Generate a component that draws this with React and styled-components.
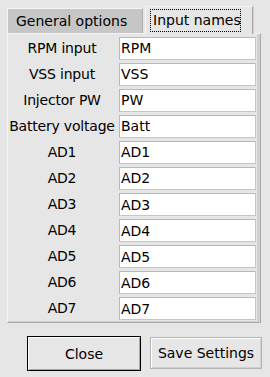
import React from "react";
import styled, { createGlobalStyle } from "styled-components";

const Global = createGlobalStyle`
  html, body { margin: 0; padding: 0; background: #e6e6e6; }
  body { font-family: "DejaVu Sans", "Liberation Sans", sans-serif; }
  * { box-sizing: border-box; }
`;

const Window = styled.div`
  width: 270px;
  height: 377px;
  padding: 6px 0 0 7px;
  background: #e6e6e6;
  font-family: "DejaVu Sans", sans-serif;
  font-size: 14px;
  color: #000;
`;

const TabBar = styled.div`
  display: flex;
  align-items: flex-start;
  height: 27px;
  position: relative;
  z-index: 1;
`;

const Tab = styled.div`
  position: relative;
  display: flex;
  align-items: center;
  height: ${(p) => (p.$selected ? "28px" : "25px")};
  margin-top: ${(p) => (p.$selected ? "0" : "2px")};
  margin-left: ${(p) => (p.$selected ? "2px" : "0")};
  width: ${(p) => p.$width}px;
  padding-left: ${(p) => (p.$selected ? "7px" : "8px")};
  background: ${(p) => (p.$selected ? "#e6e6e6" : "#c6c6c6")};
  border-top: 1px solid #f4f4f4;
  border-left: 1px solid #f4f4f4;
  border-right: 1px solid ${(p) => (p.$selected ? "#a8a8a8" : "#b0b0b0")};
  box-shadow: ${(p) => (p.$selected ? "1px 0 0 #d0d0d0" : "none")};
  white-space: nowrap;
`;

const Focus = styled.span`
  position: absolute;
  left: 4px;
  top: 2px;
  width: 91px;
  height: 23px;
  border: 1px dotted #000;
`;

const TabLabel = styled.span`
  position: relative;
  line-height: 17px;
`;

const Panel = styled.div`
  width: 254px;
  height: 290px;
  padding-top: 1px;
  border-top: 1px solid #f4f4f4;
  border-left: 1px solid #f4f4f4;
  border-right: 1px solid #a8a8a8;
  border-bottom: 1px solid #a8a8a8;
  box-shadow: inset -3px 0 0 #d0d0d0, inset 0 -1px 0 #d0d0d0;
  display: grid;
  grid-template-columns: 108px 137px;
  column-gap: 3px;
  grid-template-rows: repeat(11, 1fr);
  align-items: center;
`;

const Label = styled.div`
  text-align: center;
  white-space: nowrap;
  line-height: 17px;
  letter-spacing: -0.2px;
`;

const Field = styled.input`
  display: block;
  width: 137px;
  height: 23px;
  margin: 0;
  padding: 0 1px;
  border: 1px solid #c6c6c6;
  border-top-color: #b8b8b8;
  border-left-color: #b8b8b8;
  background: #fff;
  font-family: "DejaVu Sans", sans-serif;
  font-size: 14px;
  color: #000;
  outline: none;
`;

const ButtonBar = styled.div`
  display: flex;
  align-items: flex-start;
  margin-top: 13px;
  padding-left: 20px;
  gap: 9px;
`;

const Button = styled.button`
  width: ${(p) => p.$width}px;
  height: ${(p) => (p.$default ? "35px" : "32px")};
  margin-top: ${(p) => (p.$default ? "0" : "1px")};
  padding: 0;
  background: #e6e6e6;
  font-family: "DejaVu Sans", sans-serif;
  font-size: 14px;
  color: #000;
  border: 1px solid ${(p) => (p.$default ? "#000" : "#b4b4b4")};
  box-shadow: ${(p) =>
    p.$default
      ? "inset 1px 1px 0 #fff, inset -1px -1px 0 #a8a8a8"
      : "inset 1px 1px 0 #fff, inset -1px -1px 0 #d0d0d0"};
`;

const rows = [
  ["RPM input", "RPM"],
  ["VSS input", "VSS"],
  ["Injector PW", "PW"],
  ["Battery voltage", "Batt"],
  ["AD1", "AD1"],
  ["AD2", "AD2"],
  ["AD3", "AD3"],
  ["AD4", "AD4"],
  ["AD5", "AD5"],
  ["AD6", "AD6"],
  ["AD7", "AD7"],
];

export default function App() {
  return (
    <>
      <Global />
      <Window>
        <TabBar>
          <Tab $width={136}>
            <TabLabel>General options</TabLabel>
          </Tab>
          <Tab $selected $width={108}>
            <Focus />
            <TabLabel>Input names</TabLabel>
          </Tab>
        </TabBar>
        <Panel>
          {rows.map(([label, value]) => (
            <React.Fragment key={label}>
              <Label>{label}</Label>
              <Field defaultValue={value} />
            </React.Fragment>
          ))}
        </Panel>
        <ButtonBar>
          <Button $default $width={114}>Close</Button>
          <Button $width={112}>Save Settings</Button>
        </ButtonBar>
      </Window>
    </>
  );
}
